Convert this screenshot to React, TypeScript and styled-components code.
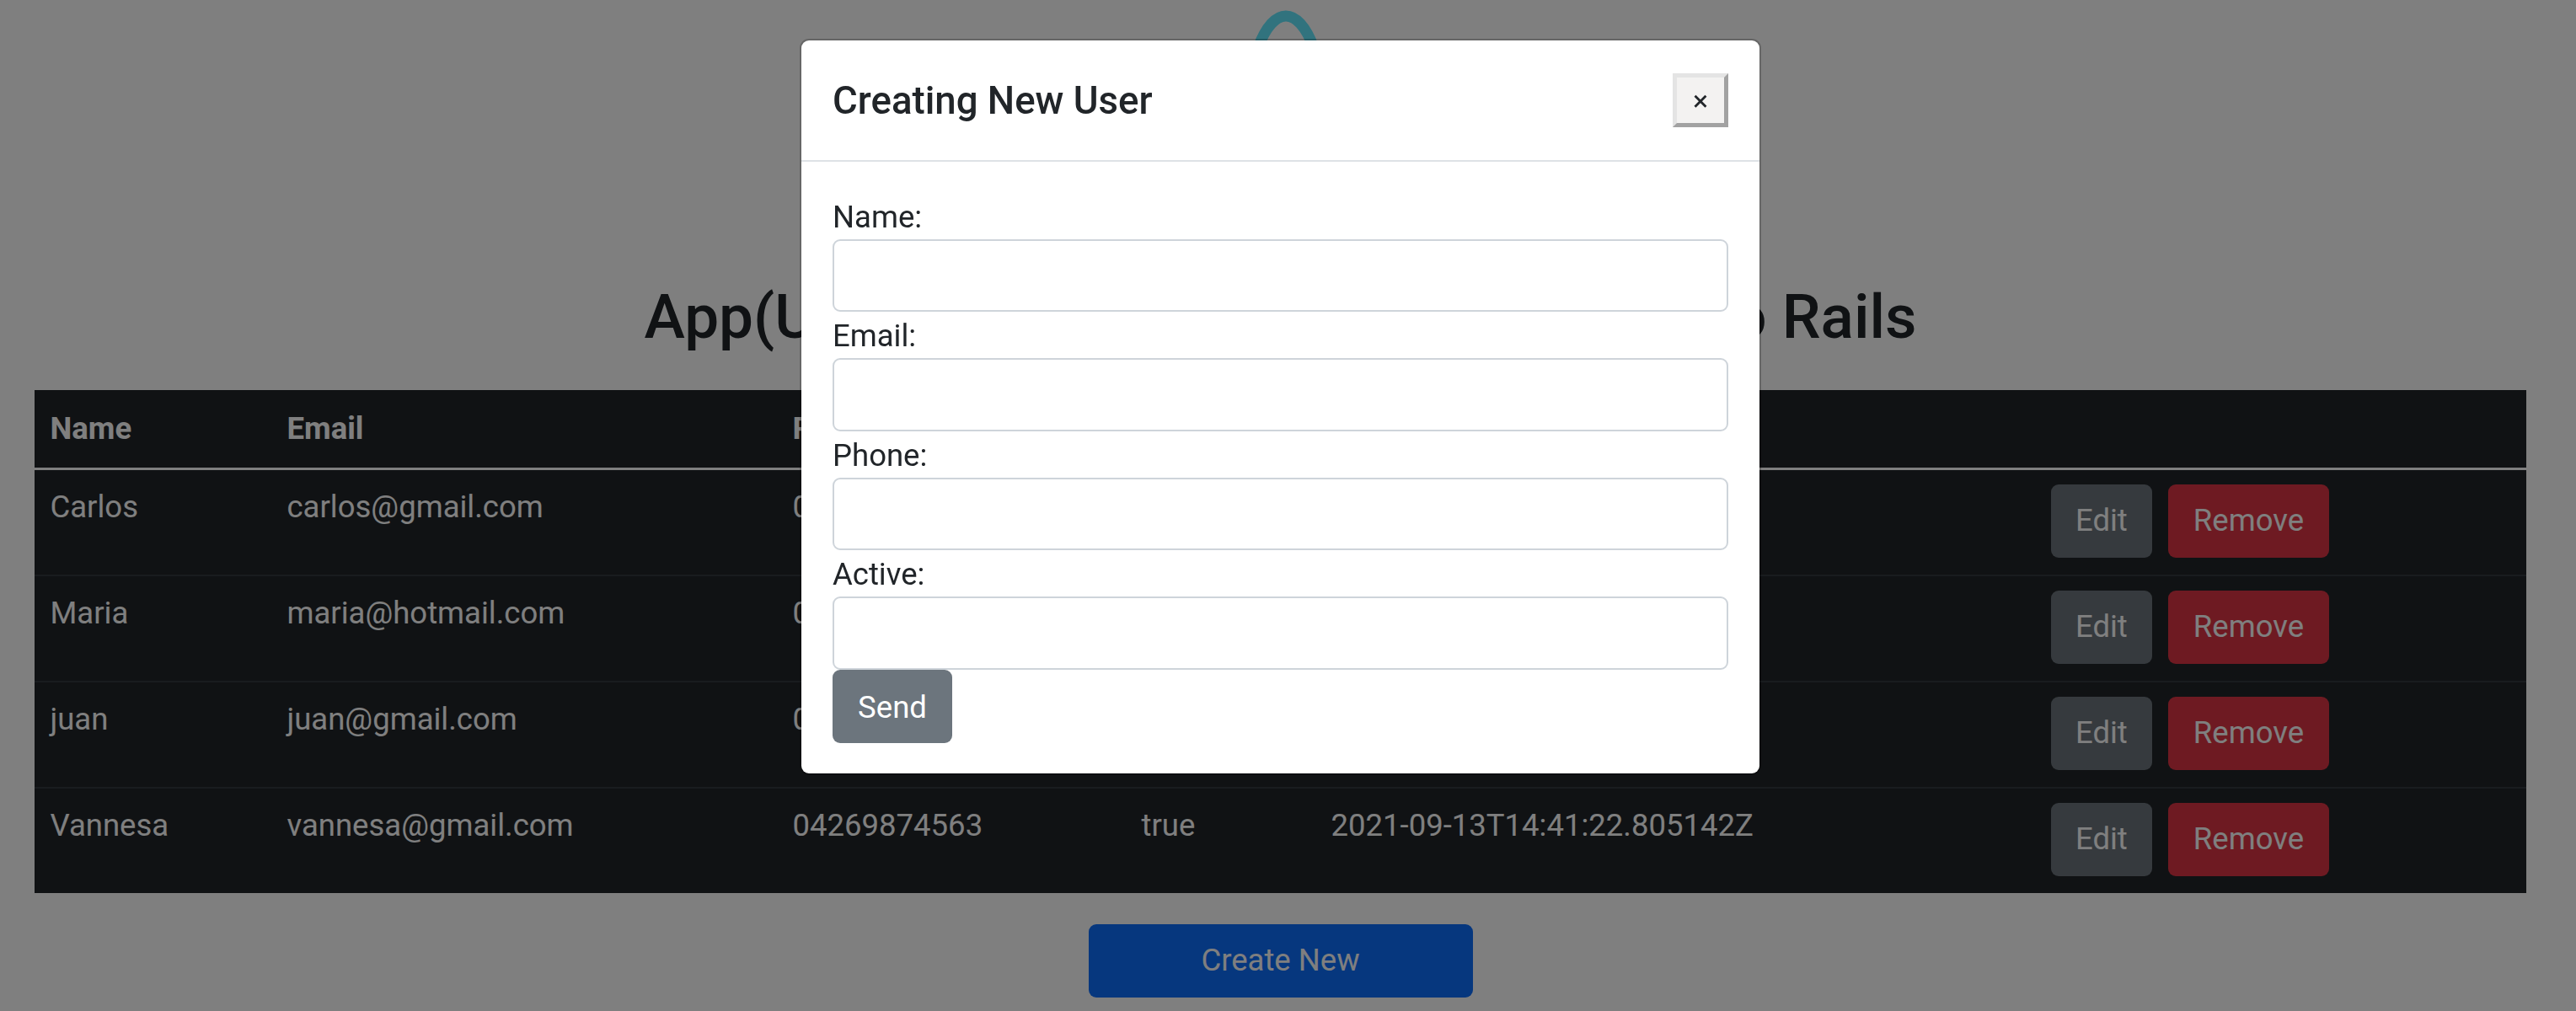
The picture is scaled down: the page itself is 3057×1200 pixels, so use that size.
import React from 'react';
import styled, { createGlobalStyle } from 'styled-components';

const GlobalStyle = createGlobalStyle`
  * {
    box-sizing: border-box;
  }

  body {
    margin: 0;
    background: #fff;
    color: #212529;
    font-family: Roboto, "Liberation Sans", sans-serif;
    font-size: 36.5px;
    line-height: 1.5;
  }
`;

const Page = styled.div`
  height: 1200px;
  overflow: hidden;
  padding: 0 59px 0 41px;
  text-align: center;
`;

const Logo = styled.svg`
  display: block;
  width: 280px;
  height: 300px;
  margin: 0 auto;
  color: #62e6fd;
`;

const Title = styled.h2`
  margin: 30px 0 41px;
  height: 92px;
  font-size: 72.9px;
  font-weight: 500;
  line-height: 92px;
`;

const UsersTable = styled.table`
  width: 100%;
  table-layout: fixed;
  border-collapse: collapse;
  background: #212529;
  color: #fff;
  text-align: left;
`;

const HeadCell = styled.th`
  padding: 18.5px 18.5px;
  font-weight: 700;
  vertical-align: bottom;
  border-bottom: 3px solid #fff;
`;

const Cell = styled.td`
  padding: 17.5px 18.5px 19.5px;
  vertical-align: top;
  border-bottom: 2px solid #32383e;

  tr:last-child & {
    border-bottom: 0;
  }
`;

const Actions = styled.div`
  display: flex;
  gap: 19px;
`;

const Button = styled.button<{ $bg: string }>`
  height: 87px;
  padding: 0 29.5px;
  border: 0;
  border-radius: 9px;
  background: ${(p) => p.$bg};
  color: #fff;
  font: inherit;
`;

const CreateButton = styled(Button)`
  display: block;
  width: 456px;
  margin: 37px auto 0;
`;

const Backdrop = styled.div`
  position: fixed;
  inset: 0;
  background: rgba(0, 0, 0, 0.5);
`;

const Modal = styled.div`
  position: fixed;
  top: 48px;
  left: 951px;
  width: 1137px;
  height: 870px;
  background: #fff;
  border-radius: 9px;
  box-shadow: 0 0 0 2px rgba(0, 0, 0, 0.2);
`;

const ModalHeader = styled.div`
  display: flex;
  align-items: center;
  justify-content: space-between;
  height: 144px;
  padding: 0 37px;
  border-bottom: 2px solid #dee2e6;
`;

const ModalTitle = styled.h5`
  margin: 2px 0 0;
  font-size: 45.6px;
  font-weight: 500;
  line-height: 1.2;
`;

const CloseButton = styled.button`
  width: 66px;
  height: 64px;
  padding: 0;
  background: #f3f2f1;
  border: 5px solid;
  border-color: #e4e4e4 #a2a2a2 #a2a2a2 #e4e4e4;
  color: #212529;
  font: 400 34px Roboto, sans-serif;
`;

const Form = styled.form`
  display: flex;
  flex-direction: column;
  align-items: flex-start;
  padding: 36.5px 37px;
`;

const Label = styled.label`
  height: 55px;
  line-height: 58px;
`;

const Input = styled.input`
  display: block;
  width: 100%;
  height: 86.6px;
  flex: none;
  padding: 0 27px;
  border: 2px solid #ced4da;
  border-radius: 9px;
  background: #fff;
`;

const SendButton = styled(Button)`
  width: 142px;
  padding: 3px 0 0;
`;

const users = [
  { name: 'Carlos', email: 'carlos@gmail.com', phone: '04121234567', active: 'true', created: '2021-09-13T14:38:10.412305Z' },
  { name: 'Maria', email: 'maria@hotmail.com', phone: '04147654321', active: 'true', created: '2021-09-13T14:39:02.130877Z' },
  { name: 'juan', email: 'juan@gmail.com', phone: '04243216547', active: 'true', created: '2021-09-13T14:40:15.667421Z' },
  { name: 'Vannesa', email: 'vannesa@gmail.com', phone: '04269874563', active: 'true', created: '2021-09-13T14:41:22.805142Z' },
];

const columnWidths = [281, 600, 414, 225, 854, 583];

const ReactLogo = () => (
  <Logo viewBox="0 0 280 300" fill="none" stroke="currentColor" strokeWidth="13">
    <ellipse cx="146" cy="150" rx="47" ry="131" />
    <ellipse cx="146" cy="150" rx="47" ry="131" transform="rotate(60 146 150)" />
    <ellipse cx="146" cy="150" rx="47" ry="131" transform="rotate(-60 146 150)" />
  </Logo>
);

export default function App() {
  return (
    <>
      <GlobalStyle />
      <Page>
        <ReactLogo />
        <Title>App(Users) built with React connected to Rails</Title>
        <UsersTable>
          <colgroup>
            {columnWidths.map((w, i) => (
              <col key={i} width={w} />
            ))}
          </colgroup>
          <thead>
            <tr>
              <HeadCell>Name</HeadCell>
              <HeadCell>Email</HeadCell>
              <HeadCell>Phone</HeadCell>
              <HeadCell>Active</HeadCell>
              <HeadCell>Created At</HeadCell>
              <HeadCell />
            </tr>
          </thead>
          <tbody>
            {users.map((u) => (
              <tr key={u.email}>
                <Cell>{u.name}</Cell>
                <Cell>{u.email}</Cell>
                <Cell>{u.phone}</Cell>
                <Cell>{u.active}</Cell>
                <Cell>{u.created}</Cell>
                <Cell>
                  <Actions>
                    <Button $bg="#6c757d">Edit</Button>
                    <Button $bg="#dc3545">Remove</Button>
                  </Actions>
                </Cell>
              </tr>
            ))}
          </tbody>
        </UsersTable>
        <CreateButton $bg="#0d6efd">Create New</CreateButton>
      </Page>
      <Backdrop />
      <Modal>
        <ModalHeader>
          <ModalTitle>Creating New User</ModalTitle>
          <CloseButton>×</CloseButton>
        </ModalHeader>
        <Form>
          <Label>Name:</Label>
          <Input />
          <Label>Email:</Label>
          <Input />
          <Label>Phone:</Label>
          <Input />
          <Label>Active:</Label>
          <Input />
          <SendButton $bg="#6c757d">Send</SendButton>
        </Form>
      </Modal>
    </>
  );
}
